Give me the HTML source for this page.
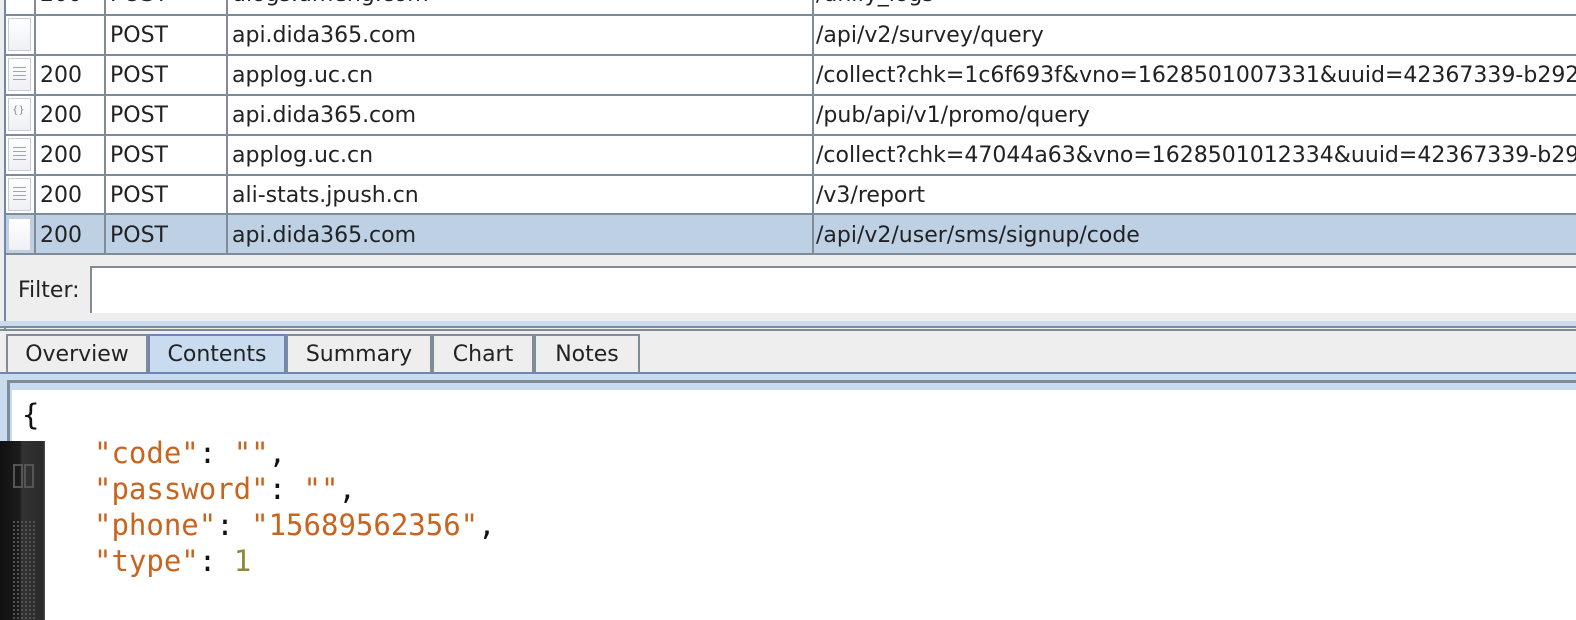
<!DOCTYPE html>
<html><head><style>
body{margin:0;width:1576px;height:620px;overflow:hidden;background:#eeeeee;position:relative;font-family:"DejaVu Sans","Liberation Sans",sans-serif;}
.a{position:absolute;}
.t{position:absolute;font-size:22px;color:#222;line-height:40px;white-space:nowrap}
.hl{position:absolute;height:2px;background:#7f8b98;left:6px;width:1570px}
.vl{position:absolute;width:2px;background:#7f8b98;top:0;height:255px}
.ic{position:absolute;left:8px;width:23px;height:33px;background:linear-gradient(#fff,#eef0f4);border:1px solid #c8ccd6;box-sizing:border-box}
.ic i{position:absolute;left:4px;width:13px;height:1px;background:#9aa}
.tab{position:absolute;top:334px;height:38px;border:2px solid #7f8b98;border-bottom:none;box-sizing:border-box;font-size:22px;color:#222;text-align:center;line-height:38px;background:#eee}
.c{position:absolute;font-family:"DejaVu Sans Mono","Liberation Mono",monospace;font-size:29px;line-height:36px;white-space:pre;color:#111}
.o{color:#c8641e}
</style></head><body>
<div class="a" style="left:6px;top:0;width:1570px;height:255px;background:#fff"></div>
<div class="a" style="left:6px;top:214px;width:1570px;height:40px;background:#bdd0e4"></div>
<div class="a" style="left:4px;top:0;width:2px;height:330px;background:#6f86b5"></div>
<div class="hl" style="top:14px"></div><div class="hl" style="top:54px"></div><div class="hl" style="top:94px"></div><div class="hl" style="top:134px"></div><div class="hl" style="top:174px"></div><div class="hl" style="top:213px"></div><div class="hl" style="top:253px"></div>
<div class="vl" style="left:34px"></div><div class="vl" style="left:104px"></div><div class="vl" style="left:226px"></div><div class="vl" style="left:812px"></div>
<div class="ic" style="top:18px"></div>
<div class="ic" style="top:58px"><i style="top:8px"></i><i style="top:12px"></i><i style="top:16px"></i><i style="top:20px"></i></div>
<div class="ic" style="top:98px"><span style="position:absolute;left:3px;top:6px;font-size:10px;color:#888">{}</span></div>
<div class="ic" style="top:138px"><i style="top:8px"></i><i style="top:12px"></i><i style="top:16px"></i><i style="top:20px"></i></div>
<div class="ic" style="top:178px"><i style="top:8px"></i><i style="top:12px"></i><i style="top:16px"></i><i style="top:20px"></i></div>
<div class="ic" style="top:218px"></div>
<div class="t" style="left:40px;top:-25px">200</div><div class="t" style="left:110px;top:-25px">POST</div><div class="t" style="left:232px;top:-25px">ulogs.umeng.com</div><div class="t" style="left:816px;top:-25px">/unify_logs</div>
<div class="t" style="left:110px;top:16px">POST</div><div class="t" style="left:232px;top:16px">api.dida365.com</div><div class="t" style="left:816px;top:16px">/api/v2/survey/query</div>
<div class="t" style="left:40px;top:56px">200</div><div class="t" style="left:110px;top:56px">POST</div><div class="t" style="left:232px;top:56px">applog.uc.cn</div><div class="t" style="left:816px;top:56px">/collect?chk=1c6f693f&amp;vno=1628501007331&amp;uuid=42367339-b292-4</div>
<div class="t" style="left:40px;top:96px">200</div><div class="t" style="left:110px;top:96px">POST</div><div class="t" style="left:232px;top:96px">api.dida365.com</div><div class="t" style="left:816px;top:96px">/pub/api/v1/promo/query</div>
<div class="t" style="left:40px;top:136px">200</div><div class="t" style="left:110px;top:136px">POST</div><div class="t" style="left:232px;top:136px">applog.uc.cn</div><div class="t" style="left:816px;top:136px">/collect?chk=47044a63&amp;vno=1628501012334&amp;uuid=42367339-b292</div>
<div class="t" style="left:40px;top:176px">200</div><div class="t" style="left:110px;top:176px">POST</div><div class="t" style="left:232px;top:176px">ali-stats.jpush.cn</div><div class="t" style="left:816px;top:176px">/v3/report</div>
<div class="t" style="left:40px;top:216px">200</div><div class="t" style="left:110px;top:216px">POST</div><div class="t" style="left:232px;top:216px">api.dida365.com</div><div class="t" style="left:816px;top:216px">/api/v2/user/sms/signup/code</div>
<div class="t" style="left:18px;top:271px">Filter:</div>
<div class="a" style="left:90px;top:266px;width:1490px;height:47px;background:#fff;border-top:2px solid #7f8b98;border-left:2px solid #7f8b98;box-sizing:border-box"></div>
<div class="a" style="left:0;top:321px;width:1576px;height:5px;background:#c8dbef"></div>
<div class="a" style="left:0;top:326px;width:1576px;height:2px;background:#7f8b98"></div>
<div class="a" style="left:0;top:329px;width:1576px;height:2px;background:#7f8b98"></div>
<div class="tab" style="left:6px;width:142px">Overview</div>
<div class="tab" style="left:148px;width:138px;background:#c8dbef;border-color:#6f86b5;height:40px">Contents</div>
<div class="tab" style="left:286px;width:146px">Summary</div>
<div class="tab" style="left:432px;width:102px">Chart</div>
<div class="tab" style="left:534px;width:106px">Notes</div>
<div class="a" style="left:0;top:372px;width:1576px;height:2px;background:#6f86b5"></div>
<div class="a" style="left:0;top:374px;width:1576px;height:246px;background:#c8dbef"></div>
<div class="a" style="left:7px;top:380px;width:1569px;height:240px;background:#7f8b98"></div>
<div class="a" style="left:10px;top:383px;width:1566px;height:237px;background:#c8dbef"></div>
<div class="a" style="left:12px;top:390px;width:1564px;height:230px;background:#fff"></div>
<div class="c" style="left:22px;top:397px">{</div>
<div class="c" style="left:94px;top:435px"><span class="o">"code"</span>: <span class="o">""</span>,
<span class="o">"password"</span>: <span class="o">""</span>,
<span class="o">"phone"</span>: <span class="o">"15689562356"</span>,
<span class="o">"type"</span>: <span style="color:#8f8a3a">1</span></div>
<div class="a" style="left:0;top:441px;width:45px;height:179px;background:linear-gradient(90deg,#111 0,#1c1c1c 20px,#333 22px,#2a2a2a 43px,#555 45px)"></div>
<div class="a" style="left:13px;top:464px;width:6px;height:20px;border:2px solid #555"></div>
<div class="a" style="left:24px;top:464px;width:6px;height:20px;border:2px solid #555"></div>
<div class="a" style="left:12px;top:520px;width:24px;height:100px;background-image:radial-gradient(#555 1px,transparent 1.2px);background-size:4px 4px"></div>
</body></html>
